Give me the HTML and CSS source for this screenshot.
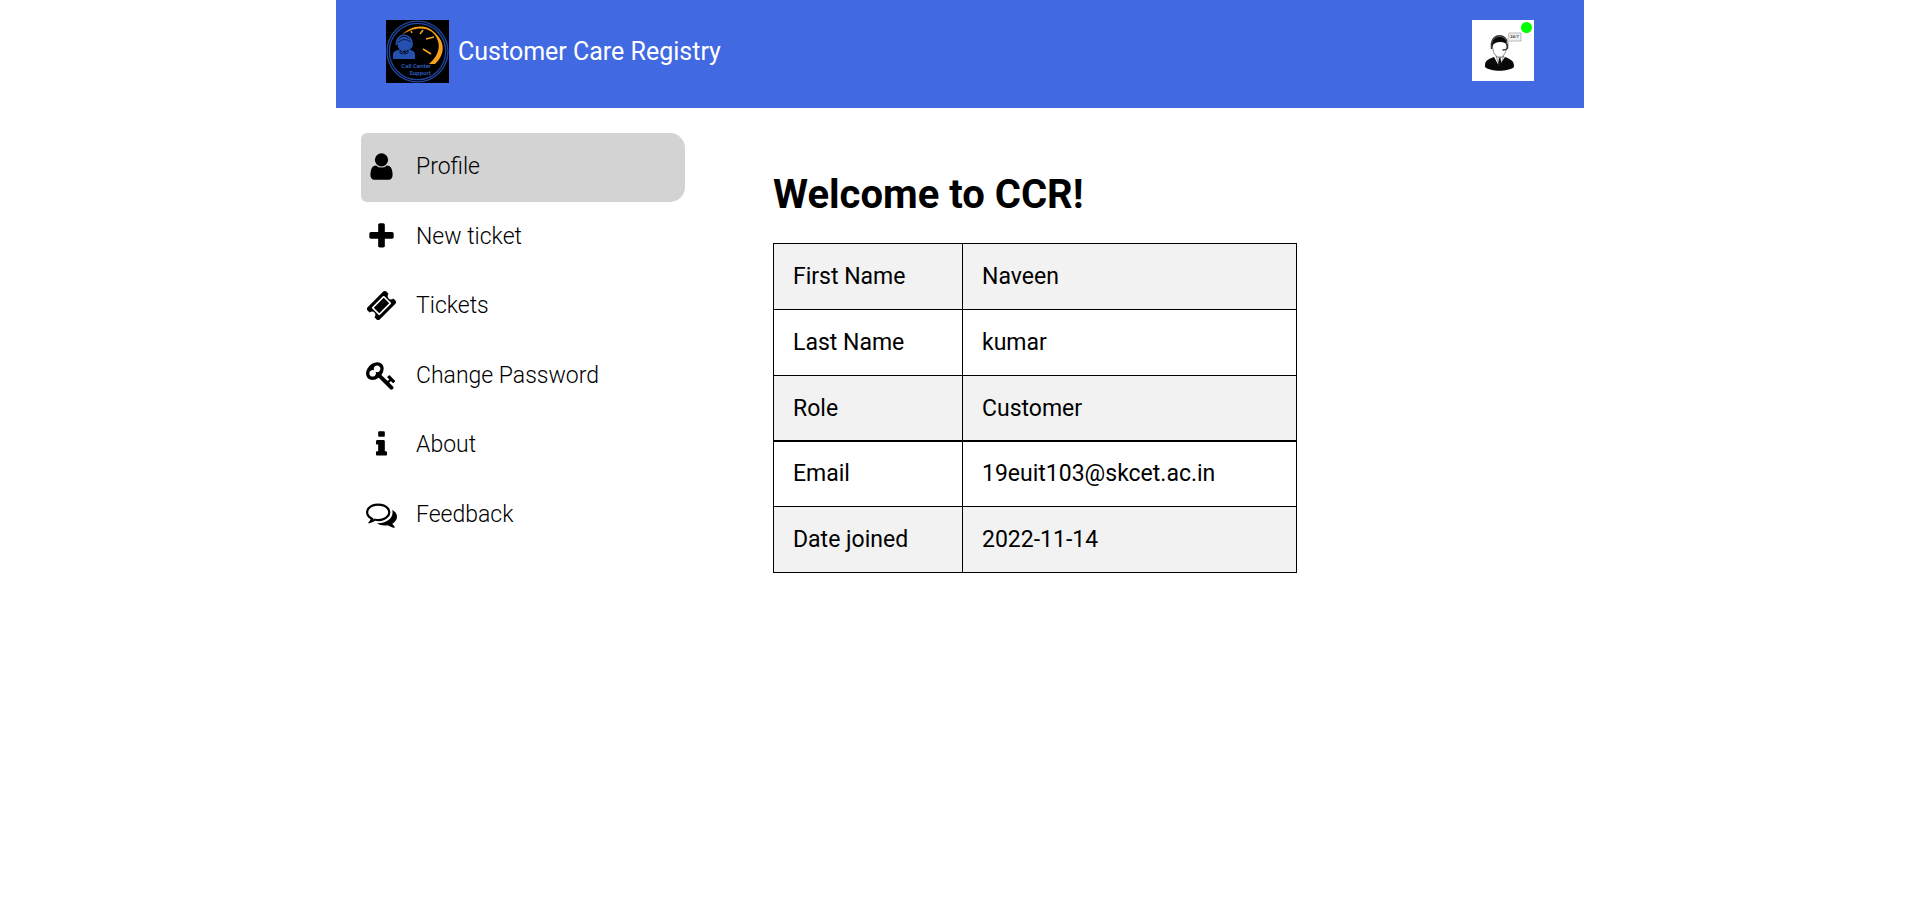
FILE: index.html
```html
<!DOCTYPE html>
<html lang="en">
<head>
<meta charset="utf-8">
<meta name="viewport" content="width=device-width, initial-scale=1">
<title>Customer Care Registry</title>
<link rel="stylesheet" href="styles.css">
</head>
<body>
<div class="page">
  <header class="header">
    <a class="brand" href="#">
      <svg class="logo" viewBox="0 0 63 63" role="img" aria-label="Call Center Support">
        <rect width="63" height="63" fill="#000"/>
        <g fill="none" stroke="#2146a0">
          <circle cx="31.5" cy="31.5" r="30.4" stroke-width="1.3"/>
          <circle cx="31.5" cy="31.5" r="28.2" stroke-width="1.3"/>
        </g>
        <path d="M16 15C24 6 39 3 48 12C60 22 59 35 49 44H43C55 34 56 21 46 12C38 6 25 8 16 15Z" fill="#f9a11b"/>
        <path d="M25 11l1 2M37 10l-3 4M48 17l-8 2M37 29l8 5" stroke="#f9a11b" stroke-width="1.5"/>
        <g fill="#2450b0">
          <path d="M11.500 24C11 19 14 17 18 17s7.500 2 7.500 7c0 4-3.500 7-7.500 7s-6.500-3-6.500-7z"/>
          <path d="M7 39v-5q0-3 8-5l3 4 4-4q7 2 7 5v5z"/>
        </g>
        <path d="M10.500 25C9 12 27 12 26 25q0 3-4 4" fill="none" stroke="#2450b0" stroke-width="1.500"/>
        <path d="M12.500 22q6-5 12 0M14 30l3 4-3-1zM22 30l-4 4 4-1z" fill="none" stroke="#000" stroke-width=".7"/>
        <text class="logo-text" x="30" y="48">Call Center</text>
        <text class="logo-text" x="34" y="55">Support</text>
      </svg>
      <span>Customer Care Registry</span>
    </a>
    <div class="avatar">
      <svg viewBox="0 0 62 61" role="img" aria-label="Support agent">
        <rect width="62" height="61" fill="#fff"/>
        <path d="M13 47c0-6 1-7 9-10l5 9 6-9c8 3 9 5 9 10-6 5-23 5-29 0z" fill="#080808"/>
        <path d="M24 36l3.500 10L32 36l-4 2z" fill="#fff" stroke="#333" stroke-width=".5"/>
        <path d="M27 38l1.500 0 1 7-2 2-1.500-2z" fill="#111"/>
        <path d="M20.500 25q0 9 5 12h4q5-3 5.500-12l-4-4h-7z" fill="#fff" stroke="#555" stroke-width=".7"/>
        <path d="M20 27c-2-13 16-15 15.500 0l-2-4q-6-2-10 0l-2 1z" fill="#080808"/>
        <path d="M19.500 24C20 13 35 13 35.500 24M19.500 23v6M35.500 23v5q-1 2-5 2" fill="none" stroke="#333" stroke-width="1.500"/>
        <path d="M37 13h12v8H37l-2 3 1-5z" fill="#f2f2f2" stroke="#aaa" stroke-width=".8"/>
        <text class="bubble-text" x="42.500" y="18">24/7</text>
      </svg>
      <span class="status" title="Online"></span>
    </div>
  </header>
  <div class="body">
    <nav class="nav">
      <a class="item active" href="#"><svg class="icon" viewBox="0 0 1792 1792"><path d="M1536 1399q0 109-62.500 187t-150.500 78h-854q-88 0-150.500-78t-62.500-187q0-85 8.500-160.500t31.500-152 58.500-131 94-89 134.500-34.500q131 128 313 128t313-128q76 0 134.500 34.500t94 89 58.500 131 31.500 152 8.500 160.500zm-256-887q0 159-112.500 271.500t-271.500 112.500-271.500-112.500-112.500-271.500 112.500-271.500 271.500-112.500 271.500 112.500 112.500 271.500z"/></svg><span>Profile</span></a>
      <a class="item" href="#"><svg class="icon" viewBox="0 0 1792 1792"><path d="M1600 736v192q0 40-28 68t-68 28h-416v416q0 40-28 68t-68 28h-192q-40 0-68-28t-28-68v-416h-416q-40 0-68-28t-28-68v-192q0-40 28-68t68-28h416v-416q0-40 28-68t68-28h192q40 0 68 28t28 68v416h416q40 0 68 28t28 68z"/></svg><span>New ticket</span></a>
      <a class="item" href="#"><svg class="icon" viewBox="0 0 1792 1792"><path d="M1024 452l316 316-572 572-316-316zm-211 979l618-618q19-19 19-45t-19-45l-362-362q-18-18-45-18t-45 18l-618 618q-19 19-19 45t19 45l362 362q18 18 45 18t45-18zm889-637l-907 908q-37 37-90.500 37t-90.500-37l-126-126q56-56 56-136t-56-136-136-56-136 56l-125-126q-37-37-37-90.500t37-90.500l907-906q37-37 90.500-37t90.500 37l125 125q-56 56-56 136t56 136 136 56 136-56l126 125q37 37 37 90.500t-37 90.500z"/></svg><span>Tickets</span></a>
      <a class="item" href="#"><svg class="icon" viewBox="0 0 1792 1792"><path d="M832 512q0-80-56-136t-136-56-136 56-56 136q0 42 19 83-41-19-83-19-80 0-136 56t-56 136 56 136 136 56 136-56 56-136q0-42-19-83 41 19 83 19 80 0 136-56t56-136zm851 704q0 17-49 66t-66 49q-9 0-28.500-16t-36.500-33-38.500-40-24.500-26l-96 96 220 220q28 28 28 68 0 42-39 81t-81 39q-40 0-68-28l-671-671q-176 131-365 131-163 0-265.500-102.500t-102.500-265.500q0-160 95-313t248-248 313-95q163 0 265.500 102.500t102.500 265.500q0 189-131 365l355 355 96-96q-3-3-26-24.500t-40-38.500-33-36.500-16-28.500q0-17 49-66t66-49q13 0 23 10 6 6 46 44.500t82 79.500 86.500 86 73 78 28.500 41z"/></svg><span>Change Password</span></a>
      <a class="item" href="#"><svg class="icon" viewBox="0 0 1792 1792"><path d="M1216 1344v128q0 26-19 45t-45 19h-512q-26 0-45-19t-19-45v-128q0-26 19-45t45-19h64v-384h-64q-26 0-45-19t-19-45v-128q0-26 19-45t45-19h384q26 0 45 19t19 45v576h64q26 0 45 19t19 45zm-128-1152v192q0 26-19 45t-45 19h-256q-26 0-45-19t-19-45v-192q0-26 19-45t45-19h256q26 0 45 19t19 45z"/></svg><span>About</span></a>
      <a class="item" href="#"><svg class="icon" viewBox="0 0 1792 1792"><path d="M704 384q-153 0-286 52t-211.500 141-78.500 191q0 82 53 158t149 132l97 56-35 84q34-20 62-39l44-31 53 10q78 14 153 14 153 0 286-52t211.500-141 78.500-191-78.500-191-211.500-141-286-52zm0-128q191 0 353.500 68.500t256.500 186.500 94 257-94 257-256.500 186.500-353.500 68.500q-86 0-176-16-124 88-278 128-36 9-86 16h-3q-11 0-20.500-8t-11.500-21q-1-3-1-6.500t.500-6.500 2-6l2.500-5 3.500-5.500 4-5 4.500-5 4-4.500q5-6 23-25t26-29.500 22.500-29 25-38.500 20.500-44q-124-72-195-177t-71-224q0-139 94-257t256.500-186.500 353.500-68.500zm822 1169q10 24 20.500 44t25 38.500 22.500 29 26 29.500 23 25q1 1 4 4.500t4.500 5 4 5 3.500 5.500l2.500 5 2 6 .500 6.500-1 6.500q-3 14-13 22t-22 7q-50-7-86-16-154-40-278-128-90 16-176 16-271 0-472-132 58 4 88 4 161 0 309-45t264-129q125-92 192-212t67-254q0-77-23-152 129 71 204 178t75 230q0 120-71 224.500t-195 176.500z"/></svg><span>Feedback</span></a>
    </nav>
    <main class="main">
      <h1 class="title">Welcome to CCR!</h1>
      <table class="details">
        <tbody>
          <tr><th scope="row">First Name</th><td>Naveen</td></tr>
          <tr><th scope="row">Last Name</th><td>kumar</td></tr>
          <tr class="divided"><th scope="row">Role</th><td>Customer</td></tr>
          <tr class="compact"><th scope="row">Email</th><td>19euit103@skcet.ac.in</td></tr>
          <tr><th scope="row">Date joined</th><td>2022-11-14</td></tr>
        </tbody>
      </table>
    </main>
  </div>
</div>
</body>
</html>
```

FILE: styles.css
```css
* { box-sizing: border-box; }

body {
  margin: 0;
  padding-left: 9px;
  background: #fff;
  color: #000;
  font-family: Roboto, sans-serif;
}

.page {
  max-width: 1248px;
  margin: 0 auto;
}

.header {
  display: flex;
  justify-content: space-between;
  align-items: flex-start;
  padding: 20px 50px 25px;
  background: #4169e1;
}

.brand {
  display: flex;
  align-items: center;
  gap: 9px;
  color: #fff;
  font-size: 25px;
  text-decoration: none;
}

.logo {
  display: block;
  width: 63px;
  height: 63px;
}

.logo-text {
  fill: #3462cc;
  font-family: "Liberation Sans Narrow", Roboto, sans-serif;
  font-size: 6px;
  font-weight: 500;
  text-anchor: middle;
}

.bubble-text {
  fill: #444;
  font-size: 4px;
  font-weight: 700;
  text-anchor: middle;
}

.avatar {
  position: relative;
  width: 62px;
}

.avatar svg { display: block; }

.status {
  position: absolute;
  top: 2px;
  right: 2px;
  width: 11px;
  height: 11px;
  border-radius: 50%;
  background: #0f0;
}

.body {
  display: flex;
  align-items: flex-start;
  padding: 25px;
}

.nav {
  display: grid;
  grid-auto-rows: 1fr;
  gap: 1px;
  flex: 0 1 324px;
  min-height: 416px;
}

.item {
  display: flex;
  align-items: center;
  gap: 19px;
  padding: 0 5px 1px;
  border-radius: 6px 15px 15px 6px;
  color: #000;
  font-size: 23px;
  font-weight: 300;
  text-decoration: none;
}

.active { background: #d3d3d3; }

.icon {
  flex: none;
  width: 31px;
  height: 31px;
}

.main {
  flex: 1;
  padding: 38px 0 0 88px;
}

.title {
  margin: 0 0 24px;
  font-size: 40px;
  line-height: 48px;
  font-weight: 700;
}

.details {
  width: 524px;
  max-width: 100%;
  border-spacing: 0;
  border-top: 1px solid #000;
  border-left: 1px solid #000;
  font-size: 23px;
  line-height: 27px;
}

.details th,
.details td {
  padding: 19px;
  border-right: 1px solid #000;
  border-bottom: 1px solid #000;
  font-weight: 400;
  text-align: left;
}

.details th { width: 189px; }

.details tr:nth-child(odd) { background: #f2f2f2; }

.details .divided > * { border-bottom-width: 2px; padding-bottom: 18px; }

.details .compact > * { padding-top: 18px; }
```
